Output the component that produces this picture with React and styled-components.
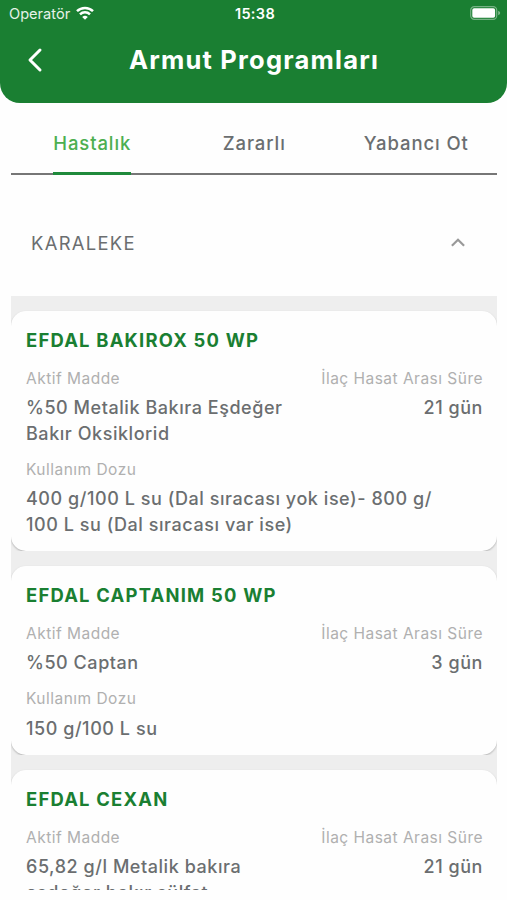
import React from 'react';
import styled, { createGlobalStyle } from "styled-components";

const programs = [
  {
    name: "EFDAL BAKIROX 50 WP",
    active: ["%50 Metalik Bakıra Eşdeğer", "Bakır Oksiklorid"],
    interval: "21 gün",
    dose: ["400 g/100 L su (Dal sıracası yok ise)- 800 g/", "100 L su (Dal sıracası var ise)"],
  },
  {
    name: "EFDAL CAPTANIM 50 WP",
    active: ["%50 Captan"],
    interval: "3 gün",
    dose: ["150 g/100 L su"],
  },
  {
    name: "EFDAL CEXAN",
    active: ["65,82 g/l Metalik bakıra", "eşdeğer bakır sülfat"],
    interval: "21 gün",
  },
];

const tabs = ["Hastalık", "Zararlı", "Yabancı Ot"];

export default function App() {
  return (
    <>
      <GlobalStyle />
      <Screen>
        <Header>
          <StatusBar>
            <Carrier>
              Operatör
              <WifiIcon />
            </Carrier>
            <Clock>15:38</Clock>
            <BatteryIcon />
          </StatusBar>
          <NavBar>
            <BackButton aria-label="Geri">
              <svg width="16" height="26" viewBox="0 0 16 26" fill="none" stroke="#fff" strokeWidth="3" strokeLinecap="round" strokeLinejoin="round">
                <path d="M13 3 L3 13 L13 23" />
              </svg>
            </BackButton>
            <PageTitle>Armut Programları</PageTitle>
          </NavBar>
        </Header>
        <Content>
          <TabBar>
            {tabs.map((tab, i) => (
              <Tab key={tab}>
                <TabLabel $active={i === 0}>{tab}</TabLabel>
              </Tab>
            ))}
          </TabBar>
          <SectionHeader>
            <SectionTitle>KARALEKE</SectionTitle>
            <svg width="14" height="9" viewBox="0 0 14 9" fill="none" stroke="#999" strokeWidth="2.2">
              <path d="M0.9 7.8 L7 1.8 L13.1 7.8" />
            </svg>
          </SectionHeader>
          <List>
            {programs.map((item) => (
              <React.Fragment key={item.name}>
                <Gap />
                <ProgramCard item={item} />
              </React.Fragment>
            ))}
          </List>
        </Content>
      </Screen>
    </>
  )
}

function ProgramCard({ item }) {
  return (
    <Card>
      <CardTitle>{item.name}</CardTitle>
      <Columns>
        <Field>
          <Label>Aktif Madde</Label>
          {item.active.map((line) => <Value key={line}>{line}</Value>)}
        </Field>
        <Field $right>
          <Label>İlaç Hasat Arası Süre</Label>
          <Value>{item.interval}</Value>
        </Field>
      </Columns>
      {item.dose && (
        <Field>
          <Label>Kullanım Dozu</Label>
          {item.dose.map((line) => <Value key={line}>{line}</Value>)}
        </Field>
      )}
    </Card>
  )
}

function WifiIcon() {
  return (
    <svg width="18" height="14" viewBox="0 0 18 14" fill="none" stroke="#fff" strokeWidth="2.5">
      <path d="M1 5.2 A11.4 11.4 0 0 1 17 5.2" />
      <path d="M4 8.4 A7.1 7.1 0 0 1 14 8.4" />
      <path d="M9 13.8 L6.2 11 A4 4 0 0 1 11.8 11 Z" fill="#fff" stroke="none" />
    </svg>
  )
}

function BatteryIcon() {
  return (
    <svg width="31" height="14" viewBox="0 0 31 14">
      <rect x="0.7" y="0.7" width="26" height="12.6" rx="3.6" fill="none" stroke="#fff" strokeOpacity="0.4" strokeWidth="1.2" />
      <rect x="2.3" y="2.3" width="22.8" height="9.4" rx="1.8" fill="#fff" />
      <path d="M28.2 4.8 Q30.2 5.6 30.2 7 Q30.2 8.4 28.2 9.2 Z" fill="#fff" fillOpacity="0.45" />
    </svg>
  )
}

const GlobalStyle = createGlobalStyle`
    * {
        box-sizing: border-box;
    }
    body {
        margin: 0;
        background-color: #fff;
        font-family: Inter, "Liberation Sans", sans-serif;
    }
`;

const Screen = styled.div`
    display: flex;
    flex-direction: column;
    width: 507px;
    height: 900px;
    padding-bottom: 10px;
    overflow: hidden;
    background-color: #fefefe;
`;

const Header = styled.header`
    flex: none;
    height: 103px;
    background-color: #1a7f32;
    border-radius: 0 0 20px 20px;
    color: white;
`;

const StatusBar = styled.div`
    display: grid;
    grid-template-columns: 1fr auto 1fr;
    align-items: center;
    height: 26px;
    padding: 0 6px 0 9px;

    > svg {
        justify-self: end;
    }
`;

const Carrier = styled.div`
    display: flex;
    align-items: center;
    gap: 6px;
    padding-top: 2px;
    font-size: 14.6px;
    color: #e6f2e8;

    svg {
        margin-bottom: 2px;
    }
`;

const Clock = styled.div`
    font-size: 14.5px;
    font-weight: 600;
    letter-spacing: 0.35px;
`;

const NavBar = styled.div`
    display: grid;
    grid-template-columns: 60px 1fr 60px;
    align-items: center;
    height: 67px;
`;

const BackButton = styled.button`
    display: flex;
    padding: 0 0 0 27px;
    border: none;
    background: none;
    cursor: pointer;
`;

const PageTitle = styled.h1`
    margin: 0;
    padding-left: 1px;
    text-align: center;
    font-size: 25.5px;
    font-weight: 700;
    letter-spacing: 1.22px;
    white-space: nowrap;
`;

const Content = styled.main`
    flex: 1;
    min-height: 0;
    overflow: hidden;
    padding: 0 10px 0 11px;
`;

const TabBar = styled.nav`
    display: grid;
    grid-template-columns: repeat(3, 1fr);
    height: 72px;
    padding-top: 8px;
    border-bottom: 2px solid #767676;
`;

const Tab = styled.div`
    display: flex;
    justify-content: center;
    height: 64px;
`;

const TabLabel = styled.span`
    height: 64px;
    padding-left: 0.5px;
    line-height: 64px;
    font-size: 18.5px;
    font-weight: 500;
    letter-spacing: 0.9px;
    color: ${(props) => (props.$active ? "#4caf50" : "#6b6e70")};
    border-bottom: ${(props) => (props.$active ? "3px solid #1f8a3b" : "none")};
`;

const SectionHeader = styled.div`
    display: flex;
    align-items: center;
    justify-content: space-between;
    height: 121.4px;
    padding: 14.6px 32px 0 20px;
`;

const SectionTitle = styled.h2`
    margin: 0;
    font-size: 18.4px;
    font-weight: 400;
    letter-spacing: 1.3px;
    color: #6b6e70;
`;

const List = styled.div`
    overflow: hidden;
    background-color: #eee;
`;

const Gap = styled.div`
    height: 15px;
    background-color: #eee;
`;

const Card = styled.article`
    padding: 15.6px 14px 14.2px 15px;
    border-radius: 15px;
    background-color: #fefefe;
    box-shadow: 0 1px 2px rgba(0, 0, 0, 0.25);
`;

const CardTitle = styled.h3`
    margin: 0 0 15.8px;
    line-height: 26px;
    font-size: 18.4px;
    font-weight: 700;
    letter-spacing: 1.22px;
    color: #1a7f32;
`;

const Columns = styled.div`
    display: flex;
    justify-content: space-between;
    margin-bottom: 13.4px;
`;

const Field = styled.div`
    text-align: ${(props) => (props.$right ? "right" : "left")};
`;

const Label = styled.div`
    margin-bottom: 6.5px;
    line-height: 20px;
    font-size: 15.5px;
    letter-spacing: 0.48px;
    color: #b0b0b0;
`;

const Value = styled.div`
    line-height: 25.5px;
    font-size: 18px;
    font-weight: 500;
    letter-spacing: 0.55px;
    white-space: nowrap;
    color: #6b6e70;
`;
